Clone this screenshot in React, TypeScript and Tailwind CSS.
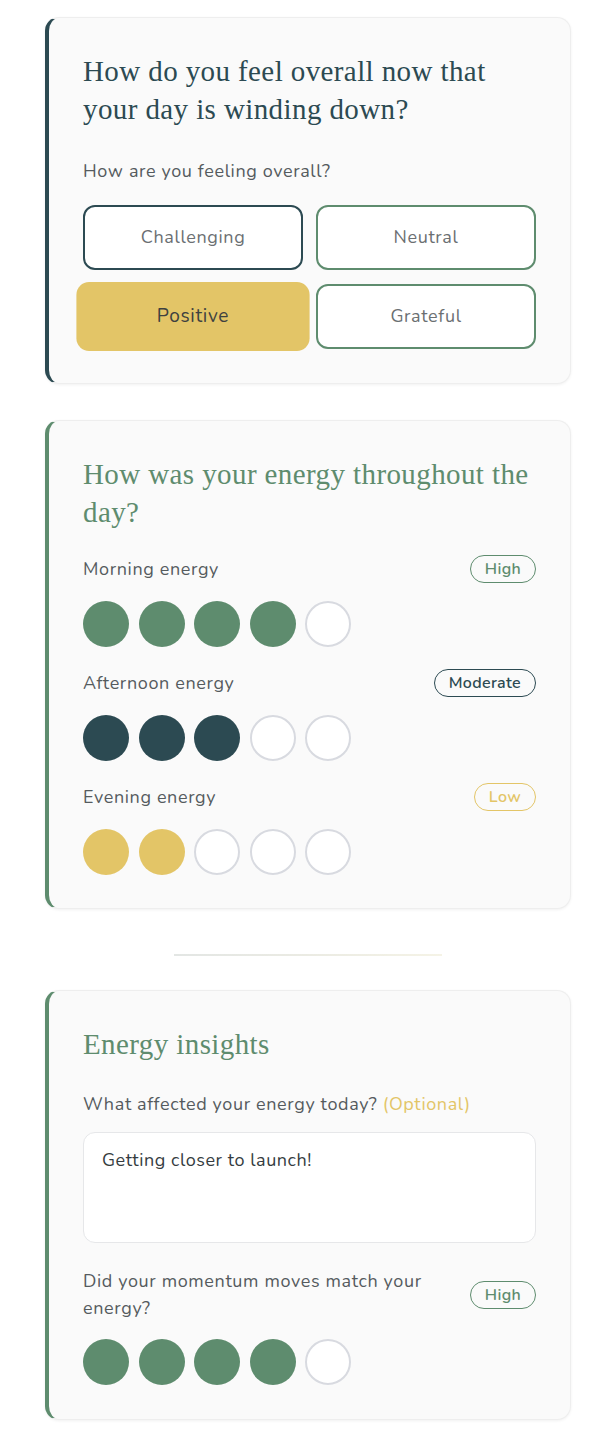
import React from 'react'

const sans = { fontFamily: 'Nunito, Lato, "Noto Sans", sans-serif' }

type Tone = 'green' | 'teal' | 'gold'

const fill: Record<Tone, string> = {
  green: 'bg-[#5e8c6e]',
  teal: 'bg-[#2c4a52]',
  gold: 'bg-[#e3c567]',
}

const badgeTone: Record<Tone, string> = {
  green: 'border-[#5e8c6e] text-[#5e8c6e]',
  teal: 'border-[#2c4a52] text-[#2c4a52]',
  gold: 'border-[#e3c567] text-[#e3c567]',
}

const Badge = ({ label, tone }: { label: string; tone: Tone }) => (
  <span
    className={`inline-flex h-[28px] shrink-0 items-center rounded-full border-[1.5px] px-[14px] text-[16px] font-semibold tracking-[0.02em] ${badgeTone[tone]}`}
  >
    {label}
  </span>
)

const Dots = ({ value, tone }: { value: number; tone: Tone }) => (
  <div className="flex gap-[9.5px]">
    {[1, 2, 3, 4, 5].map((i) =>
      i <= value ? (
        <span key={i} className={`h-[46px] w-[46px] rounded-full ${fill[tone]}`} />
      ) : (
        <span key={i} className="h-[46px] w-[46px] rounded-full border-[2.5px] border-[#d8dae0] bg-white" />
      )
    )}
  </div>
)

const EnergyRow = ({ label, badge, value, tone }: { label: string; badge: string; value: number; tone: Tone }) => (
  <div className="flex flex-col gap-[18px]">
    <div className="flex items-center justify-between">
      <span className="text-[18px] tracking-[0.035em] text-[#555b5e]">{label}</span>
      <Badge label={badge} tone={tone} />
    </div>
    <Dots value={value} tone={tone} />
  </div>
)

const Card = ({ accent, children, bottom = 'pb-[34px]' }: { accent: string; children: React.ReactNode; bottom?: string }) => (
  <div
    className={`rounded-[14px] border border-l-4 border-[#eeeeee] bg-[#fafafa] pt-[34px] px-[34px] shadow-[0_1px_3px_rgba(0,0,0,0.06)] ${bottom} ${accent}`}
  >
    {children}
  </div>
)

const Title = ({ color, children }: { color: string; children: React.ReactNode }) => (
  <h2
    className={`text-[29px] leading-[38px] tracking-[0.4px] ${color}`}
    style={{ fontFamily: '"Liberation Serif", "DejaVu Serif", serif' }}
  >
    {children}
  </h2>
)

const moods = [
  { label: 'Challenging', cls: 'border-2 border-[#2c4a52] bg-white text-[#6b6f72]' },
  { label: 'Neutral', cls: 'border-2 border-[#5e8c6e] bg-white text-[#6b6f72]' },
  { label: 'Positive', cls: 'scale-[1.06] bg-[#e3c567] text-[#3e4140]' },
  { label: 'Grateful', cls: 'border-2 border-[#5e8c6e] bg-white text-[#6b6f72]' },
]

export default function App() {
  return (
    <div className="min-h-screen bg-white px-[45px] pt-[17px] pb-[22px]" style={sans}>
      <Card accent="border-l-[#2c4a52]">
        <Title color="text-[#2c4a52]">How do you feel overall now that your day is winding down?</Title>
        <p className="mt-[30px] text-[18px] leading-[26px] tracking-[0.035em] text-[#555b5e]">How are you feeling overall?</p>
        <div className="mt-[21px] grid grid-cols-2 gap-x-[13px] gap-y-[14px]">
          {moods.map((m) => (
            <button key={m.label} className={`h-[65px] rounded-[12px] text-[18px] tracking-[0.035em] ${m.cls}`}>
              {m.label}
            </button>
          ))}
        </div>
      </Card>

      <div className="mt-[36px]">
        <Card accent="border-l-[#5e8c6e]" bottom="pb-[33px]">
          <Title color="text-[#5e8c6e]">How was your energy throughout the day?</Title>
          <div className="mt-[24px] flex flex-col gap-[22px]">
            <EnergyRow label="Morning energy" badge="High" value={4} tone="green" />
            <EnergyRow label="Afternoon energy" badge="Moderate" value={3} tone="teal" />
            <EnergyRow label="Evening energy" badge="Low" value={2} tone="gold" />
          </div>
        </Card>
      </div>

      <div className="mx-auto mt-[45px] mb-[34px] h-[2px] w-[268px] bg-gradient-to-r from-[#e3e6e4] via-[#ebebe3] to-[#f5f3e6]" />

      <Card accent="border-l-[#5e8c6e]">
        <Title color="text-[#5e8c6e]">Energy insights</Title>
        <p className="mt-[28px] text-[18px] leading-[26px] tracking-[0.035em] text-[#555b5e]">
          What affected your energy today? <span className="text-[#e3c567]">(Optional)</span>
        </p>
        <div className="mt-[15px] h-[111px] rounded-[12px] border border-[#e6e7e9] bg-white px-[18px] py-[14px] text-[18px] tracking-[0.03em] text-[#353c3f]">
          Getting closer to launch!
        </div>
        <div className="mt-[25px] flex items-center justify-between gap-4">
          <span className="max-w-[360px] text-[18px] leading-[27px] tracking-[0.035em] text-[#555b5e]">
            Did your momentum moves match your energy?
          </span>
          <Badge label="High" tone="green" />
        </div>
        <div className="mt-[17px]">
          <Dots value={4} tone="green" />
        </div>
      </Card>
    </div>
  )
}
